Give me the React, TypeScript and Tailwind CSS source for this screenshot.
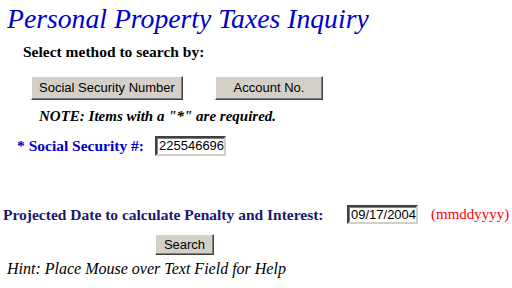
export default function App() {
  const btn =
    "flex items-center justify-center bg-[#d4d0c8] text-[13px] text-black font-['Liberation_Sans'] border border-t-white border-l-white border-b-[#404040] border-r-[#404040] shadow-[inset_-1px_-1px_#808080]";
  const field =
    "flex items-center bg-white pl-[2px] text-[13px] text-black font-['Liberation_Sans'] border-2 border-t-[#404040] border-l-[#404040] border-b-[#d4d0c8] border-r-[#d4d0c8] shadow-[inset_1px_1px_#808080]";

  return (
    <div className="w-[512px] h-[288px] overflow-hidden bg-white">
      <div className="h-[38px] pl-[7px] font-['Liberation_Serif'] text-[27.7px] leading-[38px] italic text-[#0000cc]">
        Personal Property Taxes Inquiry
      </div>

      <div className="h-[28px] pl-[23px] font-['Liberation_Serif'] text-[15.5px] leading-[28px] font-bold text-black">
        Select method to search by:
      </div>

      <div className="mt-[10px] flex h-[24px]">
        <div className={`${btn} ml-[31px] w-[152px]`}>Social Security Number</div>
        <div className={`${btn} ml-[32px] w-[108px]`}>Account No.</div>
      </div>

      <div className="h-[32px] pl-[39px] font-['Liberation_Serif'] text-[15px] leading-[32px] font-bold italic text-black">
        NOTE: Items with a &quot;*&quot; are required.
      </div>

      <div className="mt-[4px] flex h-[20px] items-center">
        <span className="ml-[17px] w-[138px] font-['Liberation_Serif'] text-[15.5px] font-bold text-[#0000cc]">
          * Social Security #:
        </span>
        <div className={`${field} h-[20px] w-[71px]`}>225546696</div>
      </div>

      <div className="mt-[49px] flex h-[19px] items-center">
        <span className="ml-[3px] w-[344px] font-['Liberation_Serif'] text-[15.5px] font-bold text-[#191970]">
          Projected Date to calculate Penalty and Interest:
        </span>
        <div className={`${field} h-[19px] w-[71px]`}>09/17/2004</div>
        <span className="ml-[13px] font-['Liberation_Serif'] text-[15px] text-[#ff0000]">(mmddyyyy)</span>
      </div>

      <div className="mt-[10px] flex h-[21px]">
        <div className={`${btn} ml-[155px] w-[59px]`}>Search</div>
      </div>

      <div className="h-[28px] pl-[7px] font-['Liberation_Serif'] text-[16px] leading-[28px] italic text-black">
        Hint: Place Mouse over Text Field for Help
      </div>
    </div>
  );
}
